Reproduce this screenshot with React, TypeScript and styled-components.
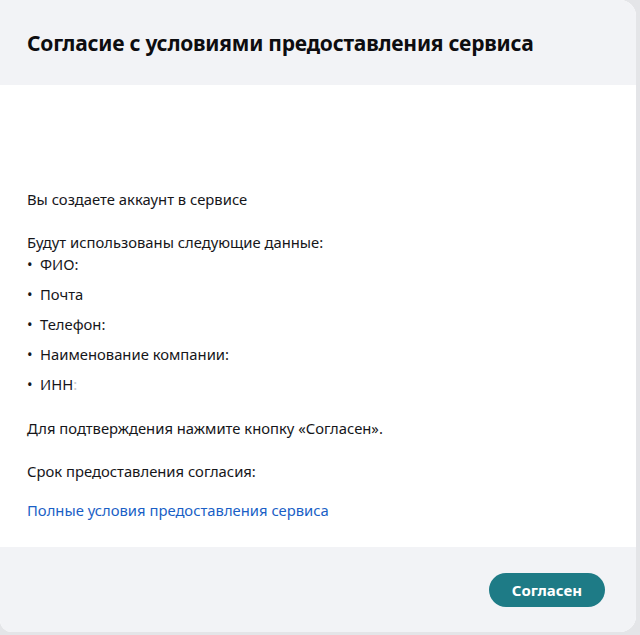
import React from 'react';
import styled, { createGlobalStyle } from 'styled-components';

const GlobalStyle = createGlobalStyle`
  html, body {
    margin: 0;
    padding: 0;
    background: #e4e5e8;
  }
  body {
    font-family: "Noto Sans", "Open Sans", sans-serif;
    color: #16161a;
  }
`;

const Modal = styled.div`
  width: 636px;
  height: 632px;
  background: #ffffff;
  border-radius: 0 16px 16px 12px;
  overflow: hidden;
  display: flex;
  flex-direction: column;
`;

const Header = styled.div`
  height: 85px;
  box-sizing: border-box;
  background: #f2f3f6;
  padding: 0 27px;
  display: flex;
  align-items: center;
`;

const Title = styled.h1`
  margin: 0;
  font-size: 21px;
  font-weight: 700;
  line-height: 28px;
  color: #0d0d10;
  letter-spacing: -0.22px;
`;

const Body = styled.div`
  flex: 0 0 462px;
  box-sizing: border-box;
  padding: 103px 27px 0;
  font-size: 14.8px;
  line-height: 22px;
`;

const Paragraph = styled.p<{ $gap?: number }>`
  margin: ${(p) => p.$gap ?? 21}px 0 0;
  &:first-child {
    margin-top: 0;
  }
`;

const List = styled.ul`
  list-style: none;
  margin: 0;
  padding: 0;
  display: flex;
  flex-direction: column;
  gap: 8px;
`;

const Item = styled.li`
  display: flex;
  gap: 7px;
  &::before {
    content: '•';
    width: 6px;
  }
`;

const Faded = styled.span`
  color: #c8c8cc;
`;

const Link = styled.a`
  display: block;
  margin-top: 17px;
  color: #1a5fc6;
  text-decoration: none;
`;

const Footer = styled.div`
  flex: 1;
  background: #f2f3f6;
  display: flex;
  justify-content: flex-end;
  align-items: flex-start;
  padding: 26px 31px 0 0;
`;

const Button = styled.button`
  height: 34px;
  padding: 0 23px;
  border: none;
  border-radius: 17px;
  background: #1e7b86;
  color: #ffffff;
  font-family: "Noto Sans", "Open Sans", sans-serif;
  font-size: 15px;
  font-weight: 700;
  cursor: pointer;
`;

const fields = ['ФИО:', 'Почта', 'Телефон:', 'Наименование компании:'];

export default function App() {
  return (
    <>
      <GlobalStyle />
      <Modal>
        <Header>
          <Title>Согласие с условиями предоставления сервиса</Title>
        </Header>
        <Body>
          <Paragraph>Вы создаете аккаунт в сервисе</Paragraph>
          <Paragraph>Будут использованы следующие данные:</Paragraph>
          <List>
            {fields.map((f) => (
              <Item key={f}>
                <span>{f}</span>
              </Item>
            ))}
            <Item>
              <span>
                ИНН<Faded>:</Faded>
              </span>
            </Item>
          </List>
          <Paragraph $gap={22}>Для подтверждения нажмите кнопку «Согласен».</Paragraph>
          <Paragraph>Срок предоставления согласия:</Paragraph>
          <Link href="#">Полные условия предоставления сервиса</Link>
        </Body>
        <Footer>
          <Button>Согласен</Button>
        </Footer>
      </Modal>
    </>
  );
}
